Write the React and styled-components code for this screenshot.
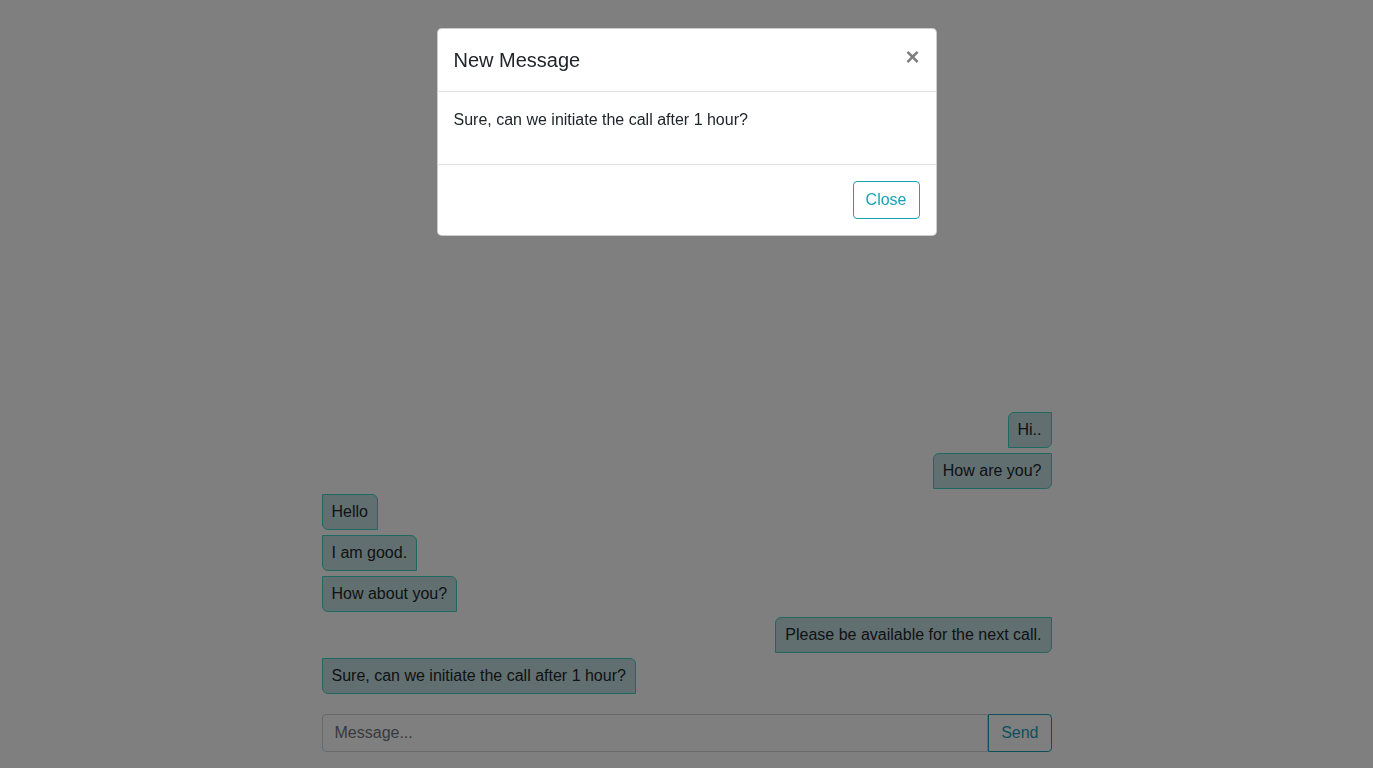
import styled, { createGlobalStyle } from "styled-components";

const GlobalStyle = createGlobalStyle`
  * { box-sizing: border-box; }
  body {
    margin: 0;
    font-family: "Liberation Sans", Arial, sans-serif;
    font-size: 16px;
    line-height: 1.5;
    color: #212529;
    background: #fff;
  }
`;

const Page = styled.div`
  height: 100vh;
  display: flex;
  flex-direction: column;
  justify-content: flex-end;
  padding-bottom: 16px;
`;

const Chat = styled.div`
  width: 730px;
  margin: 0 auto;
`;

const Messages = styled.div`
  display: flex;
  flex-direction: column;
  gap: 5px;
`;

const Bubble = styled.div`
  align-self: ${(p) => (p.mine ? "flex-end" : "flex-start")};
  padding: 5px 9px;
  background: #c4dfe0;
  border: 1px solid #3cd2c4;
  border-radius: ${(p) => (p.mine ? "6px 0 6px 0" : "0 6px 0 6px")};
  line-height: 24px;
`;

const InputGroup = styled.div`
  display: flex;
  margin-top: 20px;
`;

const Input = styled.input`
  flex: 1;
  height: 38px;
  padding: 6px 12px;
  font: inherit;
  color: #495057;
  border: 1px solid #ced4da;
  border-radius: 4px 0 0 4px;
  outline: none;
  &::placeholder { color: #6c757d; }
`;

const OutlineButton = styled.button`
  height: 38px;
  padding: 6px 12px;
  font: inherit;
  line-height: 24px;
  color: #17a2b8;
  background: transparent;
  border: 1px solid #17a2b8;
  border-radius: ${(p) => (p.attached ? "0 4px 4px 0" : "4px")};
  margin: ${(p) => (p.attached ? "0" : "4px")};
  cursor: pointer;
`;

const Backdrop = styled.div`
  position: fixed;
  inset: 0;
  background: rgba(0, 0, 0, 0.5);
`;

const Modal = styled.div`
  position: fixed;
  top: 28px;
  left: 50%;
  width: 500px;
  margin-left: -250px;
  background: #fff;
  border: 1px solid rgba(0, 0, 0, 0.2);
  border-radius: 4.8px;
  display: flex;
  flex-direction: column;
`;

const ModalHeader = styled.div`
  display: flex;
  align-items: flex-start;
  justify-content: space-between;
  padding: 16px;
  border-bottom: 1px solid #dee2e6;
`;

const Title = styled.h5`
  margin: 0;
  font-size: 20px;
  font-weight: 500;
  line-height: 30px;
`;

const CloseX = styled.button`
  padding: 16px;
  margin: -16px -16px -16px auto;
  background: transparent;
  border: 0;
  font-family: inherit;
  font-size: 24px;
  font-weight: 700;
  line-height: 1;
  color: #000;
  text-shadow: 0 1px 0 #fff;
  opacity: 0.5;
  cursor: pointer;
`;

const ModalBody = styled.div`
  padding: 16px;
  p { margin: 0 0 16px; }
`;

const ModalFooter = styled.div`
  display: flex;
  justify-content: flex-end;
  padding: 12px;
  border-top: 1px solid #dee2e6;
`;

const messages = [
  { text: "Hi..", mine: true },
  { text: "How are you?", mine: true },
  { text: "Hello" },
  { text: "I am good." },
  { text: "How about you?" },
  { text: "Please be available for the next call.", mine: true },
  { text: "Sure, can we initiate the call after 1 hour?" },
];

export default function App() {
  return (
    <>
      <GlobalStyle />
      <Page>
        <Chat>
          <Messages>
            {messages.map((m, i) => (
              <Bubble key={i} mine={m.mine}>
                {m.text}
              </Bubble>
            ))}
          </Messages>
          <InputGroup>
            <Input placeholder="Message..." />
            <OutlineButton attached>Send</OutlineButton>
          </InputGroup>
        </Chat>
      </Page>
      <Backdrop />
      <Modal>
        <ModalHeader>
          <Title>New Message</Title>
          <CloseX>×</CloseX>
        </ModalHeader>
        <ModalBody>
          <p>Sure, can we initiate the call after 1 hour?</p>
        </ModalBody>
        <ModalFooter>
          <OutlineButton>Close</OutlineButton>
        </ModalFooter>
      </Modal>
    </>
  );
}
